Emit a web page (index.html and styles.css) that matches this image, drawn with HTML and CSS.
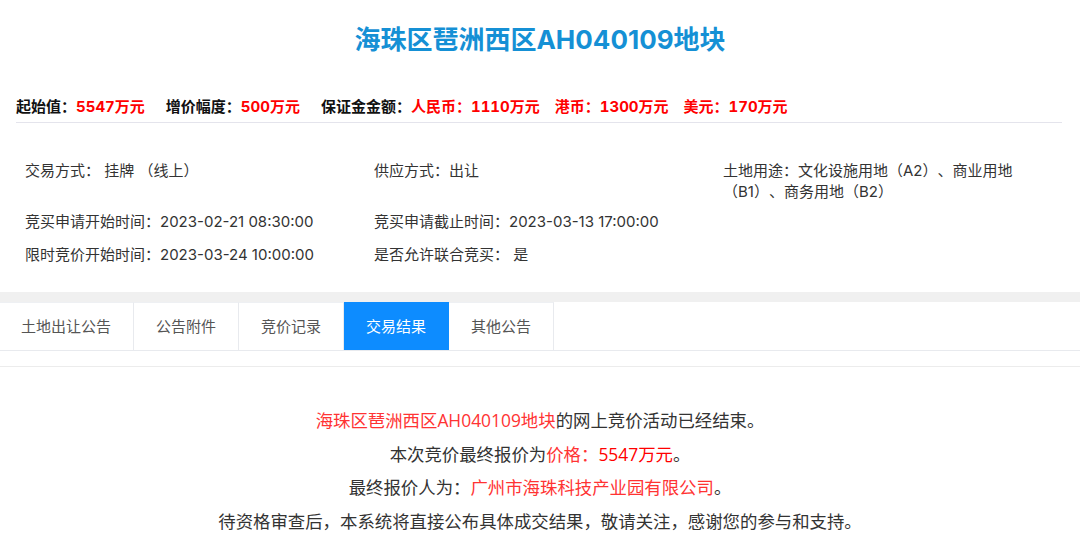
FILE: index.html
```html
<!DOCTYPE html>
<html lang="zh-CN">
<head>
<meta charset="utf-8">
<title>海珠区琶洲西区AH040109地块</title>
<link rel="stylesheet" href="styles.css">
</head>
<body>
<div class="page">
  <h1 class="title">海珠区琶洲西区AH040109地块</h1>
  <div class="prices">
    <span class="price-item">起始值：<em>5547万元</em></span>
    <span class="price-item">增价幅度：<em>500万元</em></span>
    <span class="price-item">保证金金额：<em>人民币：1110万元</em><em class="sub">港币：1300万元</em><em class="sub">美元：170万元</em></span>
  </div>
  <div class="info">
    <div class="cell">交易方式：&nbsp;挂牌 （线上）</div>
    <div class="cell">供应方式：出让</div>
    <div class="cell wrap">土地用途：文化设施用地（A2）、商业用地（B1）、商务用地（B2）</div>
    <div class="cell">竞买申请开始时间：2023-02-21 08:30:00</div>
    <div class="cell">竞买申请截止时间：2023-03-13 17:00:00</div>
    <div class="cell"></div>
    <div class="cell">限时竞价开始时间：2023-03-24 10:00:00</div>
    <div class="cell">是否允许联合竞买：&nbsp;是</div>
    <div class="cell"></div>
  </div>
  <div class="band"></div>
  <div class="tabs">
    <div class="tab">土地出让公告</div>
    <div class="tab">公告附件</div>
    <div class="tab">竞价记录</div>
    <div class="tab active">交易结果</div>
    <div class="tab">其他公告</div>
  </div>
  <div class="spacer"></div>
  <div class="result">
    <p><span class="red">海珠区琶洲西区AH040109地块</span>的网上竞价活动已经结束。</p>
    <p>本次竞价最终报价为<span class="red">价格：<b>5547万元</b></span>。</p>
    <p>最终报价人为：<span class="red">广州市海珠科技产业园有限公司</span>。</p>
    <p>待资格审查后，本系统将直接公布具体成交结果，敬请关注，感谢您的参与和支持。</p>
  </div>
</div>
</body>
</html>
```

FILE: styles.css
```css
html, body {
  margin: 0;
  padding: 0;
  background: #fff;
}
body {
  font-family: Inter, "Noto Sans CJK SC", sans-serif;
  color: #333;
  text-spacing-trim: space-all;
}
.page {
  width: 1080px;
}
.title {
  margin: 0;
  padding-top: 22px;
  font-size: 26px;
  line-height: 36px;
  font-weight: bold;
  color: #1590d5;
  text-align: center;
}
.prices {
  margin: 38px 18px 0 16px;
  padding-bottom: 4px;
  border-bottom: 1px solid #e4e4ec;
  font-size: 15px;
  line-height: 22px;
  font-weight: bold;
  color: #111;
  font-variant-numeric: tabular-nums;
  display: flex;
  gap: 21px;
}
.prices em {
  font-style: normal;
  color: #f00;
}
.prices em.sub {
  margin-left: 15px;
}
.info {
  display: grid;
  grid-template-columns: 349px 349px 300px;
  row-gap: 12px;
  padding: 37px 0 0 25px;
  font-size: 15px;
  line-height: 21px;
  color: #333;
}
.cell.wrap {
  margin-bottom: -3px;
}
.band {
  margin-top: 27px;
  height: 10px;
  background: #f0f0f0;
}
.tabs {
  display: flex;
  height: 49px;
  border-bottom: 1px solid #e8eaee;
  box-sizing: border-box;
}
.tab {
  padding: 0 22px;
  font-size: 15px;
  line-height: 47px;
  color: #555;
  border-right: 1px solid #e8eaee;
  border-top: 1px solid #eef0f3;
}
.tab:first-child {
  padding-left: 21px;
  padding-right: 22px;
}
.tab.active {
  background: #0d8cff;
  color: #fff;
  border-color: #0d8cff;
}
.spacer {
  height: 15px;
  border-bottom: 1px solid #ececec;
}
.result {
  padding-top: 37px;
  text-align: center;
  font-family: "Open Sans", "Noto Sans CJK SC", sans-serif;
  font-size: 17.4px;
  line-height: 33.5px;
  color: #333;
}
.result p {
  margin: 0;
}
.result .red {
  color: #f33;
}
.result .red b {
  font-weight: normal;
  color: #f00;
}
```
